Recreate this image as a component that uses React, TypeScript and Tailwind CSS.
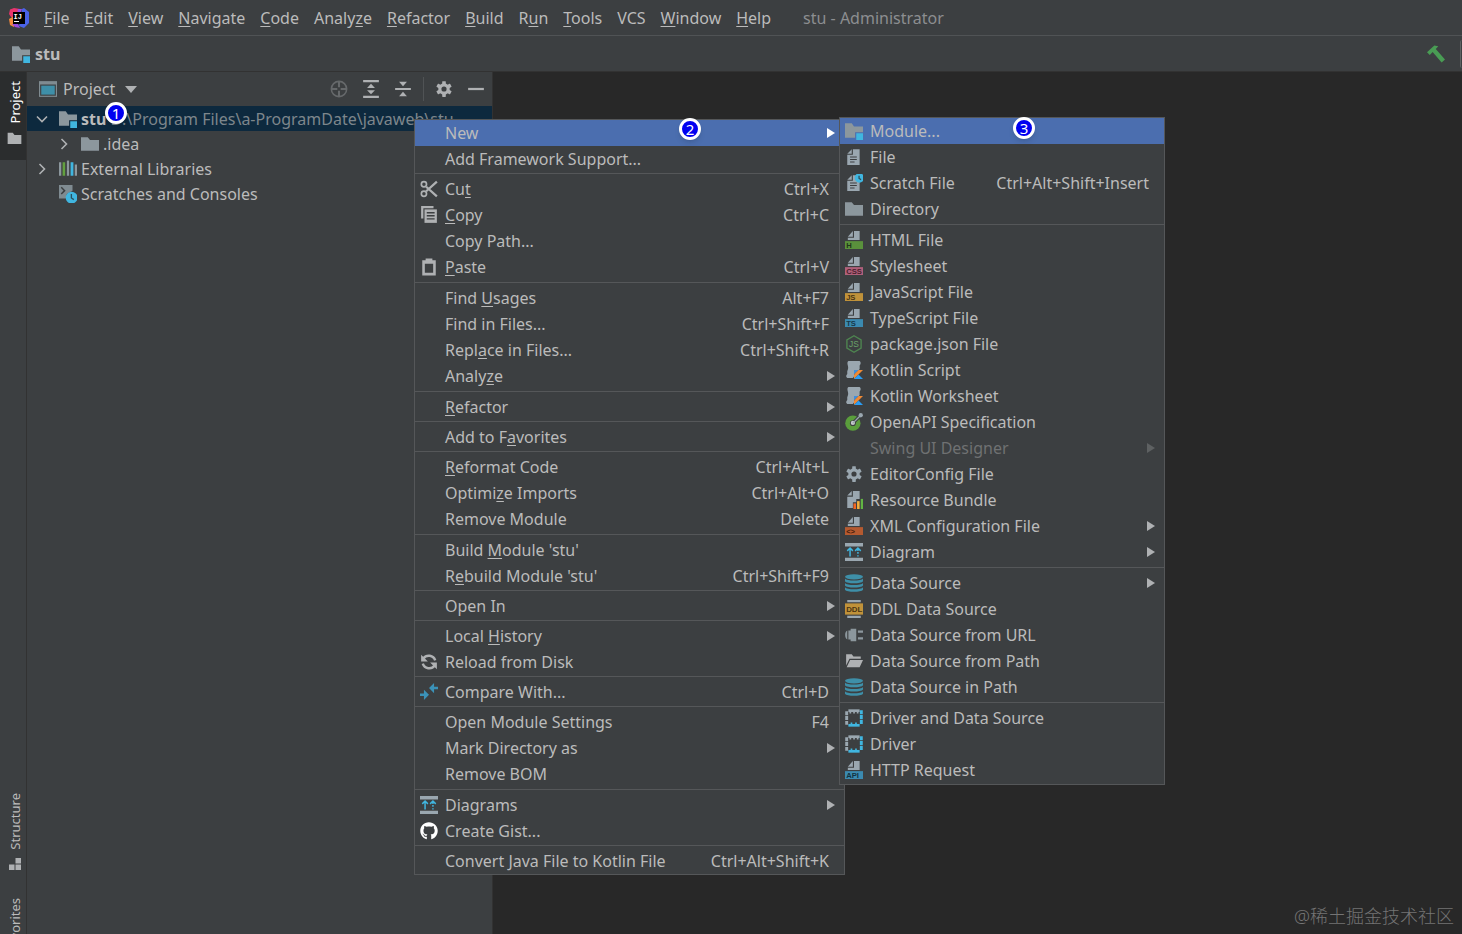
import React from 'react';
import { FaGithub } from 'react-icons/fa';

type IconName = keyof typeof icons;

interface MenuEntry {
  // '&' marks the mnemonic letter that follows it
  label: string;
  icon?: IconName;
  shortcut?: string;
  submenu?: boolean;
  active?: boolean;
  disabled?: boolean;
}

function Svg({ children }: { children: React.ReactNode }) {
  return (
    <svg viewBox="0 0 16 16" className="w-[18px] h-[18px] shrink-0" fill="none" aria-hidden="true">
      {children}
    </svg>
  );
}

function FileTag({ color, text, ink }: { color: string; text: string; ink: string }) {
  return (
    <Svg>
      <path d="M7 0v5H2.500zM8 0h5v8H2.500V6H8z" fill="#9aa7b0" />
      <rect x="0" y="9" width="16" height="7" fill={color} />
      <text x="1" y="15" fontSize="6.800" fontWeight="700" fontFamily="Liberation Sans, sans-serif" fill={ink}>
        {text}
      </text>
    </Svg>
  );
}

function Page() {
  return (
    <>
      <path d="M6 1v4H2zM7 1h6v14H2V6h5z" fill="#9aa7b0" />
      <path d="M4.500 8h6M4.500 10.200h6M4.500 12.400h4" stroke="#3c3f41" strokeWidth="1" />
    </>
  );
}

function Gear({ color }: { color: string }) {
  return (
    <Svg>
      <g fill={color}>
        <rect x="6.400" y="1" width="3.200" height="14" rx="0.500" />
        <rect x="6.400" y="1" width="3.200" height="14" rx="0.500" transform="rotate(60 8 8)" />
        <rect x="6.400" y="1" width="3.200" height="14" rx="0.500" transform="rotate(120 8 8)" />
      </g>
      <circle cx="8" cy="8" r="3.700" stroke={color} strokeWidth="2.800" />
      <circle cx="8" cy="8" r="2.300" fill="#3c3f41" />
    </Svg>
  );
}

function Database() {
  return (
    <Svg>
      <ellipse cx="8" cy="2.500" rx="8" ry="2.300" fill="#3e8fa8" />
      <path
        d="M0 4c1.500 2.400 14.500 2.400 16 0v2.400c-1.500 2.400-14.500 2.400-16 0zM0 8c1.500 2.400 14.500 2.400 16 0v2.200c-1.500 2.400-14.500 2.400-16 0zM0 11.800c1.500 2.400 14.500 2.400 16 0V14c-1.500 2.400-14.500 2.400-16 0z"
        fill="#3e8fa8"
      />
    </Svg>
  );
}

function Kotlin() {
  return (
    <Svg>
      <path d="M3 0h10c1.500 1 1 3 0 4v3L7 15H2c-1.500-1-1-2.500 0-3.500V9c1-2 1-3 0.500-5C2 2 2 1 3 0z" fill="#9aa7b0" />
      <path d="M8 8h8v8H8z" fill="#3c3f41" />
      <path d="M8 8h4L8 12z" fill="#3d8fe0" />
      <path d="M12 8h4l-8 8v-4z" fill="#f08a35" />
      <path d="M12 12l4 4H8z" fill="#2a9df4" />
    </Svg>
  );
}

function DiagramIcon() {
  return (
    <Svg>
      <path d="M0 0h16v3H0zM0 13h16v3H0z" fill="#9aa7b0" />
      <path d="M4.500 4.500V12M2 7l2.500-2.500L7 7" stroke="#40b6e0" strokeWidth="1.300" />
      <path d="M11.500 4.500v2.500M11.500 8v1.500M11.500 10.800V12M9 7l2.500-2.500L14 7" stroke="#40b6e0" strokeWidth="1.300" />
    </Svg>
  );
}

function Driver() {
  return (
    <Svg>
      <path d="M3 1.500h10" stroke="#9aa7b0" strokeWidth="2.400" />
      <path d="M4 3.300h1.500M7.300 3.300h1.500M10.500 3.300H12" stroke="#9aa7b0" strokeWidth="1.500" />
      <path d="M1.500 2v12" stroke="#9aa7b0" strokeWidth="2.600" strokeDasharray="3.500 0.800" />
      <path d="M14.500 1v13" stroke="#40b6e0" strokeWidth="2.600" strokeDasharray="3.600 0.800" />
      <path d="M3 14.500h10" stroke="#40b6e0" strokeWidth="2.400" />
      <path d="M5 12.700h1.500M9 12.700h1.500" stroke="#40b6e0" strokeWidth="1.500" />
    </Svg>
  );
}

const icons = {
  module: (
    <Svg>
      <path d="M0 1h6l2 3h8v5H9v5H0z" fill="#8c979d" />
      <rect x="10" y="10" width="6.500" height="6" fill="#40b6e0" />
    </Svg>
  ),
  folder: (
    <Svg>
      <path d="M0 2h6l2 2.500h8V14H0z" fill="#8c979d" />
    </Svg>
  ),
  cut: (
    <Svg>
      <path d="M15 1.500L5.500 10M15 14.500L5.500 6" stroke="#afb1b3" strokeWidth="2" />
      <circle cx="3.500" cy="3.800" r="2.300" stroke="#afb1b3" strokeWidth="1.500" />
      <circle cx="3.500" cy="12.200" r="2.300" stroke="#afb1b3" strokeWidth="1.500" />
    </Svg>
  ),
  copy: (
    <Svg>
      <path d="M1 0h11v2H3v9H1z" fill="#afb1b3" />
      <path d="M4 3h11v12H4z" fill="#afb1b3" />
      <path d="M6 6h7M6 8.700h7M6 11.400h7" stroke="#3c3f41" strokeWidth="1.200" />
    </Svg>
  ),
  paste: (
    <Svg>
      <path d="M2 2h3V0.500h6V2h3v13.500H2zM4.300 5v8.200h7.400V5z" fill="#afb1b3" fillRule="evenodd" />
    </Svg>
  ),
  reload: (
    <Svg>
      <path d="M13.500 6.500A6 6 0 0 0 3 4.800M2.500 9.500A6 6 0 0 0 13 11.200" stroke="#afb1b3" strokeWidth="2.200" />
      <path d="M1 1.500v6h6zM15 14.500v-6H9z" fill="#afb1b3" />
    </Svg>
  ),
  compare: (
    <Svg>
      <path d="M16 4.500h-5M0 10.500h5" stroke="#3b92b8" strokeWidth="2.200" />
      <path d="M12.500 0v9L8 4.500zM3.500 6v9L8 10.500z" fill="#3b92b8" />
    </Svg>
  ),
  diagram: <DiagramIcon />,
  github: <FaGithub className="w-[18px] h-[18px] shrink-0 text-white" aria-hidden="true" />,
  file: (
    <Svg>
      <Page />
    </Svg>
  ),
  scratch: (
    <Svg>
      <Page />
      <circle cx="12.800" cy="3.500" r="4.200" fill="#40b6e0" />
      <path d="M12.500 1.500v2.500l1.800 1" stroke="#2b4a55" strokeWidth="1.100" />
    </Svg>
  ),
  html: <FileTag color="#5a913c" text="H" ink="#22351a" />,
  css: <FileTag color="#b0607a" text="CSS" ink="#47202d" />,
  js: <FileTag color="#c0923a" text="JS" ink="#4a3514" />,
  ts: <FileTag color="#3b8ab0" text="TS" ink="#163848" />,
  api: <FileTag color="#3b8ab0" text="API" ink="#123240" />,
  xml: <FileTag color="#b55a30" text="<>" ink="#431d0c" />,
  node: (
    <Svg>
      <path d="M8 0.700l6.300 3.600v7.400L8 15.300l-6.300-3.600V4.300z" stroke="#4e8650" strokeWidth="1.200" />
      <text x="3.600" y="11" fontSize="7.500" fontFamily="Liberation Sans, sans-serif" fill="#6aa36a">
        JS
      </text>
    </Svg>
  ),
  kotlin: <Kotlin />,
  openapi: (
    <Svg>
      <circle cx="7" cy="9" r="6.800" fill="#5a9e3c" />
      <path d="M7 9l7-7" stroke="#3c3f41" strokeWidth="3" />
      <circle cx="7" cy="9" r="2.600" fill="#3c3f41" />
      <circle cx="7" cy="8.800" r="1.900" fill="#c4c9cc" />
      <path d="M7 9l7-7" stroke="#9aa7b0" strokeWidth="1.200" />
      <circle cx="14" cy="2" r="1.900" fill="#9aa7b0" />
    </Svg>
  ),
  gear: <Gear color="#9aa7b0" />,
  bundle: (
    <Svg>
      <path d="M6 0v4H2zM7 0h6v7h-3v3H7v5H2V5h5z" fill="#9aa7b0" />
      <path d="M7.500 11h2.300v5H7.500z" fill="#f26522" />
      <path d="M10.700 9H13v7h-2.300z" fill="#f4af3d" />
      <path d="M14 7h2.300v9H14z" fill="#62b543" />
    </Svg>
  ),
  database: <Database />,
  ddl: (
    <Svg>
      <path d="M2 0h12v2H2zM2 14h12v2H2z" fill="#9aa7b0" />
      <rect x="0" y="3" width="16" height="10" fill="#c0923a" />
      <text x="1" y="10.600" fontSize="7" fontWeight="700" fontFamily="Liberation Sans, sans-serif" fill="#4a3514">
        DDL
      </text>
    </Svg>
  ),
  plug: (
    <Svg>
      <path d="M2 4v8C-0.500 11-0.500 5 2 4zM3 4h2V2.500h5v11H5V12H3z" fill="#8c979d" />
      <path d="M11.500 5H16M11.500 11H16" stroke="#8c979d" strokeWidth="2.200" />
    </Svg>
  ),
  openFolder: (
    <Svg>
      <path d="M1 2h5l1.500 2H14v2H4L1 12z" fill="#afb1b3" />
      <path d="M4.500 7H16l-3 6.500H1.500z" fill="#afb1b3" />
    </Svg>
  ),
  driver: <Driver />,
  window: (
    <Svg>
      <path d="M0 1h16v14H0z" fill="#7f8b91" />
      <path d="M1 4h14v10H1z" fill="#3c3f41" />
      <path d="M2 5h12v8H2z" fill="#3e8fa8" />
    </Svg>
  ),
  libraries: (
    <Svg>
      <path d="M0 2h2v12H0z" fill="#8c979d" />
      <path d="M3.200 2h2.300v12H3.200z" fill="#62a03f" />
      <path d="M7 0.500h2v13.500H7z" fill="#8c979d" />
      <path d="M10.300 2h2.500v12h-2.500z" fill="#40b6e0" />
      <path d="M14 4h2v10h-2z" fill="#8c979d" />
    </Svg>
  ),
  consoles: (
    <Svg>
      <path d="M0 0h12v5l-5 3-1 4H0z" fill="#7f8b91" />
      <path d="M2 2l3 3-3 3" stroke="#3c3f41" strokeWidth="1.300" />
      <circle cx="11.200" cy="11.200" r="5.300" fill="#40b6e0" />
      <path d="M11 8v3.500l2.200 1.500" stroke="#28505e" strokeWidth="1.200" />
    </Svg>
  ),
  locate: (
    <Svg>
      <circle cx="8" cy="8" r="6.800" stroke="#66696b" strokeWidth="1.400" />
      <path d="M8 1v5.500M8 9.500V15M1 8h5.500M9.500 8H15" stroke="#66696b" strokeWidth="1.800" />
    </Svg>
  ),
  expand: (
    <Svg>
      <path d="M1 1h14M1 15h14" stroke="#afb1b3" strokeWidth="2" />
      <path d="M8 3.300L11.500 7h-7zM8 12.700L4.500 9h7z" fill="#afb1b3" />
    </Svg>
  ),
  collapse: (
    <Svg>
      <path d="M1 8h14" stroke="#afb1b3" strokeWidth="1.800" />
      <path d="M8 5.500L4.500 1.500h7zM8 10.500l3.500 4h-7z" fill="#afb1b3" />
    </Svg>
  ),
  settings: <Gear color="#afb1b3" />,
  minus: (
    <Svg>
      <path d="M1 8h14" stroke="#afb1b3" strokeWidth="2" />
    </Svg>
  ),
  hammer: (
    <Svg>
      <path d="M0 6.500L6.500 0.500 10 1 7.800 3.500 16 12.800 13 15.500 5 6.300 2.500 8.800z" fill="#499c54" />
    </Svg>
  ),
};

const menuBar = ['&File', '&Edit', '&View', '&Navigate', '&Code', 'Analy&ze', '&Refactor', '&Build', 'R&un', '&Tools', 'VCS', '&Window', '&Help'];

const contextGroups: MenuEntry[][] = [
  [{ label: 'New', submenu: true, active: true }, { label: 'Add Framework Support...' }],
  [
    { label: 'Cu&t', icon: 'cut', shortcut: 'Ctrl+X' },
    { label: '&Copy', icon: 'copy', shortcut: 'Ctrl+C' },
    { label: 'Copy Path...' },
    { label: '&Paste', icon: 'paste', shortcut: 'Ctrl+V' },
  ],
  [
    { label: 'Find &Usages', shortcut: 'Alt+F7' },
    { label: 'Find in Files...', shortcut: 'Ctrl+Shift+F' },
    { label: 'Repl&ace in Files...', shortcut: 'Ctrl+Shift+R' },
    { label: 'Analy&ze', submenu: true },
  ],
  [{ label: '&Refactor', submenu: true }],
  [{ label: 'Add to F&avorites', submenu: true }],
  [
    { label: '&Reformat Code', shortcut: 'Ctrl+Alt+L' },
    { label: 'Optimi&ze Imports', shortcut: 'Ctrl+Alt+O' },
    { label: 'Remove Module', shortcut: 'Delete' },
  ],
  [{ label: "Build &Module 'stu'" }, { label: "R&ebuild Module 'stu'", shortcut: 'Ctrl+Shift+F9' }],
  [{ label: 'Open In', submenu: true }],
  [{ label: 'Local &History', submenu: true }, { label: 'Reload from Disk', icon: 'reload' }],
  [{ label: 'Compare With...', icon: 'compare', shortcut: 'Ctrl+D' }],
  [
    { label: 'Open Module Settings', shortcut: 'F4' },
    { label: 'Mark Directory as', submenu: true },
    { label: 'Remove BOM' },
  ],
  [{ label: 'Diagrams', icon: 'diagram', submenu: true }, { label: 'Create Gist...', icon: 'github' }],
  [{ label: 'Convert Java File to Kotlin File', shortcut: 'Ctrl+Alt+Shift+K' }],
];

const newGroups: MenuEntry[][] = [
  [
    { label: 'Module...', icon: 'module', active: true },
    { label: 'File', icon: 'file' },
    { label: 'Scratch File', icon: 'scratch', shortcut: 'Ctrl+Alt+Shift+Insert' },
    { label: 'Directory', icon: 'folder' },
  ],
  [
    { label: 'HTML File', icon: 'html' },
    { label: 'Stylesheet', icon: 'css' },
    { label: 'JavaScript File', icon: 'js' },
    { label: 'TypeScript File', icon: 'ts' },
    { label: 'package.json File', icon: 'node' },
    { label: 'Kotlin Script', icon: 'kotlin' },
    { label: 'Kotlin Worksheet', icon: 'kotlin' },
    { label: 'OpenAPI Specification', icon: 'openapi' },
    { label: 'Swing UI Designer', submenu: true, disabled: true },
    { label: 'EditorConfig File', icon: 'gear' },
    { label: 'Resource Bundle', icon: 'bundle' },
    { label: 'XML Configuration File', icon: 'xml', submenu: true },
    { label: 'Diagram', icon: 'diagram', submenu: true },
  ],
  [
    { label: 'Data Source', icon: 'database', submenu: true },
    { label: 'DDL Data Source', icon: 'ddl' },
    { label: 'Data Source from URL', icon: 'plug' },
    { label: 'Data Source from Path', icon: 'openFolder' },
    { label: 'Data Source in Path', icon: 'database' },
  ],
  [
    { label: 'Driver and Data Source', icon: 'driver' },
    { label: 'Driver', icon: 'driver' },
    { label: 'HTTP Request', icon: 'api' },
  ],
];

function Mnemonic({ text }: { text: string }) {
  const at = text.indexOf('&');
  if (at < 0) return <>{text}</>;
  return (
    <>
      {text.slice(0, at)}
      <span className="underline underline-offset-2 decoration-1">{text[at + 1]}</span>
      {text.slice(at + 2)}
    </>
  );
}

function MenuItem({ entry }: { entry: MenuEntry }) {
  const tone = entry.disabled ? 'text-[#6f7172]' : 'text-[#bbbbbb]';
  return (
    <button
      type="button"
      role="menuitem"
      disabled={entry.disabled}
      className={`flex w-full h-[26px] items-center pl-[5px] pr-[9px] text-left ${tone} ${entry.active ? 'bg-[#4b6eaf]' : ''}`}
    >
      <span className="w-[25px] shrink-0">{entry.icon && icons[entry.icon]}</span>
      <span className="flex-1 whitespace-nowrap">
        <Mnemonic text={entry.label} />
      </span>
      {entry.shortcut && <span className="pr-[6px] whitespace-nowrap">{entry.shortcut}</span>}
      {entry.submenu && (
        <svg viewBox="0 0 8 10" className="w-2 h-[10px]" aria-hidden="true">
          <path d="M0 0l8 5-8 5z" fill={entry.active ? '#ffffff' : entry.disabled ? '#5e6162' : '#afb1b3'} />
        </svg>
      )}
    </button>
  );
}

function Menu({ groups, label }: { groups: MenuEntry[][]; label: string }) {
  return (
    <div role="menu" aria-label={label} className="border border-[#555759] bg-[#3c3f41]">
      {groups.map((group, index) => (
        <React.Fragment key={index}>
          {index > 0 && <div role="separator" className="my-px h-[2px] border-t border-[#555759]" />}
          {/* longer groups get a little more room before the next separator */}
          <div role="group" className={group.length > 2 ? 'pb-px' : ''}>
            {group.map((entry) => (
              <MenuItem key={entry.label} entry={entry} />
            ))}
          </div>
        </React.Fragment>
      ))}
    </div>
  );
}

function Chevron({ open }: { open?: boolean }) {
  return (
    <svg viewBox="0 0 12 12" className="w-3 h-3 shrink-0" fill="none" aria-hidden="true">
      <path d={open ? 'M1 3.500l5 5 5-5' : 'M3.500 1l5 5-5 5'} stroke="#afb1b3" strokeWidth="1.600" />
    </svg>
  );
}

function Step({ value }: { value: number }) {
  return (
    <span className="flex w-[22px] h-[22px] items-center justify-center rounded-full border-[3px] border-white bg-[#0000f0] text-white text-[15px] leading-none shadow-md">
      {value}
    </span>
  );
}

function AppLogo() {
  return (
    <svg viewBox="0 0 20 20" className="w-5 h-5 shrink-0" aria-hidden="true">
      <path d="M1 1.500L5 0l6 1v8H2L0 6z" fill="#e8356d" />
      <path d="M0 11l5-3v11l-4-2z" fill="#f58a3c" />
      <path d="M13 1l2-1 5 4v11l-5 5-5-2z" fill="#4a63e8" />
      <path d="M9 1l4 0-2 5H8zM3 16l6 0 2 4-5-1z" fill="#9b4be0" />
      <rect x="4" y="4" width="12" height="12" fill="#000000" />
      <text x="4.500" y="10.500" fontSize="7" fontWeight="700" fontFamily="Liberation Mono, monospace" fill="#ffffff">
        IJ
      </text>
      <path d="M5 13.500h5" stroke="#ffffff" strokeWidth="1" />
    </svg>
  );
}

function SideLabel({ children }: { children: string }) {
  return <span className="[writing-mode:vertical-rl] rotate-180 text-[13px] leading-4">{children}</span>;
}

function ProjectPanel() {
  return (
    <aside className="w-[466px] shrink-0 border-r border-[#323232] bg-[#3c3f41]">
      <header className="flex h-[34px] items-center pl-3 pr-[7px]">
        <button type="button" className="flex items-center gap-[6px]">
          {icons.window}
          Project
          <svg viewBox="0 0 12 7" className="ml-1 w-3 h-[7px]" aria-hidden="true">
            <path d="M0 0h12L6 7z" fill="#afb1b3" />
          </svg>
        </button>
        <div className="ml-auto flex items-center gap-[14px]">
          <button type="button" aria-label="Select opened file">{icons.locate}</button>
          <button type="button" aria-label="Expand all">{icons.expand}</button>
          <button type="button" aria-label="Collapse all">{icons.collapse}</button>
          <span className="-mx-[3px] h-6 w-px bg-[#505355]" />
          <button type="button" aria-label="Settings">{icons.settings}</button>
          <button type="button" aria-label="Hide">{icons.minus}</button>
        </div>
      </header>
      <ul role="tree" className="[&>li]:flex [&>li]:h-[25px] [&>li]:items-center [&>li]:whitespace-nowrap">
        <li role="treeitem" aria-expanded="true" className="bg-[#0d293e] pl-[9px]">
          <Chevron open />
          <span className="ml-[11px] mr-1">{icons.module}</span>
          <strong className="font-bold">stu</strong>
          <span className="ml-1 text-[#7d868c]">D:\Program Files\a-ProgramDate\javaweb\stu</span>
        </li>
        <li role="treeitem" aria-expanded="false" className="pl-[31px]">
          <Chevron />
          <span className="ml-[11px] mr-1">{icons.folder}</span>
          .idea
        </li>
        <li role="treeitem" aria-expanded="false" className="pl-[9px]">
          <Chevron />
          <span className="ml-[11px] mr-1">{icons.libraries}</span>
          External Libraries
        </li>
        <li role="treeitem" className="pl-8">
          <span className="mr-1">{icons.consoles}</span>
          Scratches and Consoles
        </li>
      </ul>
    </aside>
  );
}

export default function App() {
  return (
    <div className="relative flex h-screen flex-col overflow-hidden bg-[#3c3f41] font-['Noto_Sans','Noto_Sans_CJK_SC',sans-serif] text-[16px] leading-5 text-[#bbbbbb]">
      <nav className="flex h-9 shrink-0 items-center border-b border-[#505355] pl-[9px]">
        <AppLogo />
        <div className="ml-[15px] flex gap-[15px]">
          {menuBar.map((item) => (
            <button key={item} type="button">
              <Mnemonic text={item} />
            </button>
          ))}
        </div>
        <span className="ml-8 text-[#8c8e90]">stu - Administrator</span>
      </nav>

      <div className="flex h-9 shrink-0 items-center border-b border-[#323232] pl-3">
        {icons.module}
        <strong className="ml-[5px] font-bold">stu</strong>
        <button type="button" aria-label="Build project" className="ml-auto mr-[15px]">
          {icons.hammer}
        </button>
        <span className="h-7 w-[2px] rounded-l border-l border-[#5e6162]" />
      </div>

      <div className="flex min-h-0 flex-1">
        <div className="flex w-[27px] shrink-0 flex-col justify-between border-r border-[#323232]">
          <button type="button" className="flex h-[88px] flex-col items-center bg-[#2b2d2e] pl-[3px] pt-[9px] text-white">
            <SideLabel>Project</SideLabel>
            <svg viewBox="0 0 16 14" className="mt-[9px] w-[15px] h-3" aria-hidden="true">
              <path d="M0 1h6l2 2.500h8V14H0z" fill="#afb1b3" />
            </svg>
          </button>
          <div className="flex h-[141px] flex-col items-center gap-7 overflow-hidden pl-[3px]">
            <button type="button" className="flex shrink-0 flex-col items-center gap-2">
              <SideLabel>Structure</SideLabel>
              <svg viewBox="0 0 12 12" className="w-3 h-3" fill="#afb1b3" aria-hidden="true">
                <path d="M6.500 0H12v5.500H6.500zM0 6.500h5.500V12H0zM6.500 6.500H12V12H6.500z" />
              </svg>
            </button>
            <button type="button" className="shrink-0">
              <SideLabel>Favorites</SideLabel>
            </button>
          </div>
        </div>
        <ProjectPanel />
        <main className="flex flex-1 items-end justify-end bg-[#282828] px-2 pb-2">
          <p className="text-lg leading-5 font-light text-[#747474]">@稀土掘金技术社区</p>
        </main>
      </div>

      <div className="absolute left-[414px] top-[119px] w-[431px]">
        <Menu groups={contextGroups} label="Project context menu" />
      </div>
      <div className="absolute left-[839px] top-[117px] w-[326px]">
        <Menu groups={newGroups} label="New" />
      </div>

      <div className="absolute left-[105px] top-[102px]">
        <Step value={1} />
      </div>
      <div className="absolute left-[679px] top-[118px]">
        <Step value={2} />
      </div>
      <div className="absolute left-[1013px] top-[117px]">
        <Step value={3} />
      </div>
    </div>
  );
}
